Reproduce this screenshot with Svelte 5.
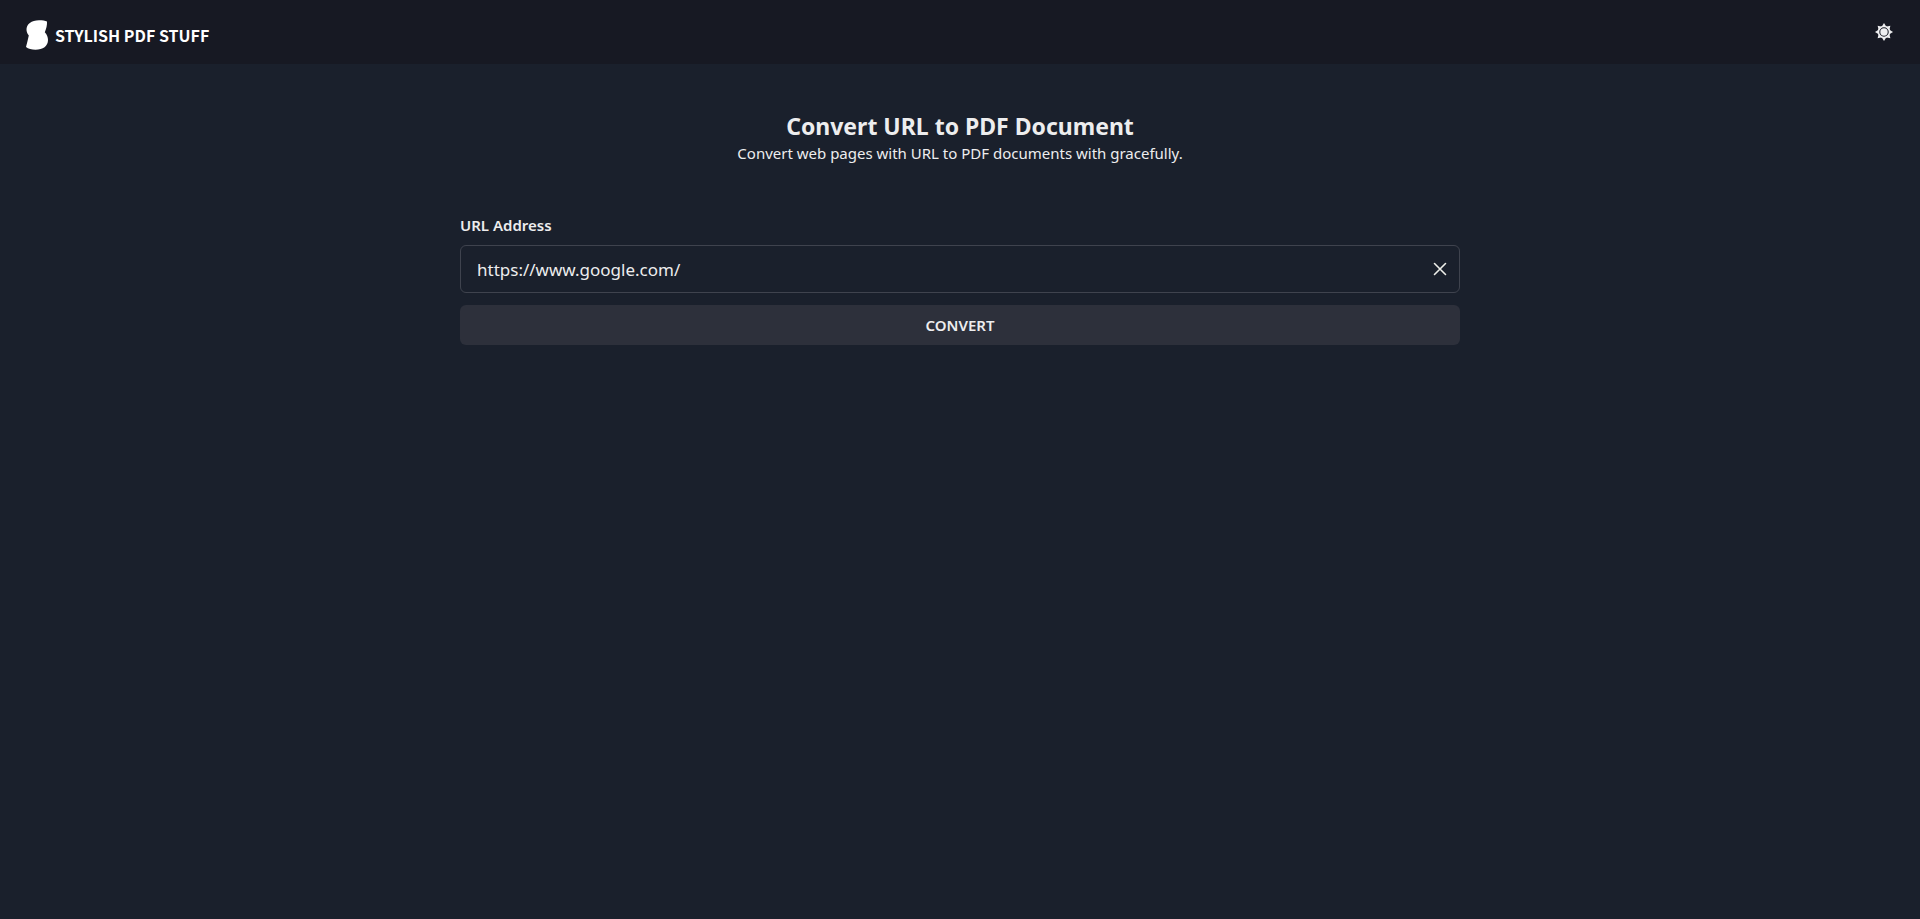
<script>
  let url = $state('https://www.google.com/');
  const spikes = Array.from({ length: 8 }, (_, i) => i * 45);
</script>

<div class="page">
  <header>
    <a class="brand" href="/">
      <svg width="22" height="30" viewBox="0 0 22 30" aria-hidden="true">
        <path fill="#fff" d="M0.500 10C0.300 4 5.500 0.200 13 0.200C16.500 0.200 19.200 0.700 21 1.600C21.200 5.500 20.300 8.500 18.800 12.200C21 14.500 22 17 22 20C22 26 17 29.800 9.500 29.800C5.500 29.800 2.300 28.800 0 27C1 23 2 19.200 2.800 15.500C1.500 14 0.700 12.200 0.500 10Z" />
      </svg>
      <span>STYLISH PDF STUFF</span>
    </a>
    <button class="theme" type="button" aria-label="Toggle color mode">
      <svg width="18" height="18" viewBox="-9 -9 18 18" aria-hidden="true">
        <g fill="#eeeef0">
          {#each spikes as angle}
            <path d="M0 -9L2.500 -5L-2.500 -5Z" transform="rotate({angle})" />
          {/each}
          <circle r="3.700" />
        </g>
        <circle r="5.500" fill="none" stroke="#eeeef0" stroke-width="1.500" />
      </svg>
    </button>
  </header>

  <main>
    <div class="intro">
      <h1>Convert URL to PDF Document</h1>
      <p>Convert web pages with URL to PDF documents with gracefully.</p>
    </div>
    <form onsubmit={(e) => e.preventDefault()}>
      <label for="url">URL Address</label>
      <div class="field">
        <input id="url" type="text" bind:value={url} />
        <button class="clear" type="button" aria-label="Clear" onclick={() => (url = '')}>
          <svg width="14" height="14" viewBox="0 0 14 14" aria-hidden="true">
            <path d="M1.500 1.500L12.500 12.500M12.500 1.500L1.500 12.500" stroke="#edeee9" stroke-width="1.600" stroke-linecap="round" />
          </svg>
        </button>
      </div>
      <button class="convert" type="submit">CONVERT</button>
    </form>
  </main>
</div>

<style>
  :global(body) {
    margin: 0;
    background: #1a202c;
  }
  .page {
    min-height: 100vh;
    color: #ededee;
    font-family: 'Noto Sans', sans-serif;
    font-size: 15px;
    line-height: 24px;
  }
  header {
    display: flex;
    align-items: center;
    justify-content: space-between;
    box-sizing: border-box;
    height: 64px;
    padding: 0 16px 0 26px;
    background: #171923;
  }
  .brand {
    display: flex;
    align-items: center;
    gap: 7px;
    padding-top: 6px;
    color: #fff;
    font-family: 'Noto Sans CJK SC', sans-serif;
    font-size: 16px;
    font-weight: 700;
    text-decoration: none;
  }
  button {
    padding: 0;
    border: 0;
    background: none;
    color: inherit;
    font: inherit;
    cursor: pointer;
  }
  .theme,
  .clear {
    display: flex;
    align-items: center;
    justify-content: center;
    width: 40px;
    height: 40px;
  }
  .clear {
    width: 38px;
  }
  main {
    box-sizing: border-box;
    max-width: 1032px;
    margin: 0 auto;
    padding: 48px 16px;
  }
  .intro {
    margin-bottom: 48px;
    text-align: center;
  }
  h1,
  p {
    margin: 0;
  }
  h1 {
    font-size: 23px;
    line-height: 29px;
    font-weight: 700;
  }
  form {
    display: flex;
    flex-direction: column;
  }
  label {
    margin-bottom: 8px;
    font-weight: 600;
  }
  .field {
    display: flex;
    align-items: center;
    box-sizing: border-box;
    height: 48px;
    margin-bottom: 12px;
    border: 1px solid #3f434e;
    border-radius: 6px;
  }
  input {
    flex: 1;
    min-width: 0;
    height: 100%;
    box-sizing: border-box;
    padding: 0 16px;
    border: 0;
    outline: 0;
    background: none;
    color: inherit;
    font: inherit;
    font-size: 17px;
  }
  .convert {
    height: 40px;
    border-radius: 6px;
    background: #2d303b;
    font-weight: 600;
  }
</style>
